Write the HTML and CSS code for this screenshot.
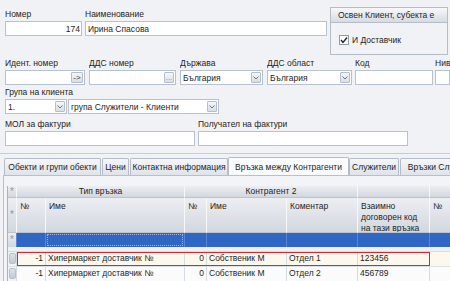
FILE: index.html
```html
<!DOCTYPE html>
<html lang="bg">
<head>
  <meta charset="UTF-8" />
  <title>Контрагент</title>
  <link rel="stylesheet" href="styles.css">
</head>
<body>

  <div class="form">
    <div class="top">
      <div class="field f-num">
        <div class="lbl">Номер</div>
        <div class="box right">174</div>
      </div>
      <div class="field f-name">
        <div class="lbl">Наименование</div>
        <div class="box">Ирина Спасова</div>
      </div>
      <div class="group">
        <div class="group-head">Освен Клиент, субекта е</div>
        <div class="group-body">
          <span class="check">
            <svg width="8" height="8" viewBox="0 0 8 8"><polyline points="1,4 3,6.5 7,1.5" fill="none" stroke="#222" stroke-width="1.4"/></svg>
          </span>
          И Доставчик
        </div>
      </div>
    </div>

    <div class="row">
      <div class="field f-ident">
        <div class="lbl">Идент. номер</div>
        <div class="box"><span class="val"></span><span class="btn wide">-&gt;</span></div>
      </div>
      <div class="field f-vat">
        <div class="lbl">ДДС номер</div>
        <div class="box"><span class="val"></span><span class="btn dots">...</span></div>
      </div>
      <div class="field f-country">
        <div class="lbl">Държава</div>
        <div class="box"><span class="val">България</span><span class="btn"><svg width="6" height="4" viewBox="0 0 6 4"><polyline points="0.5,0.5 3,3 5.5,0.5" fill="none" stroke="#6b7585" stroke-width="1"/></svg></span></div>
      </div>
      <div class="field f-area">
        <div class="lbl">ДДС област</div>
        <div class="box"><span class="val">България</span><span class="btn"><svg width="6" height="4" viewBox="0 0 6 4"><polyline points="0.5,0.5 3,3 5.5,0.5" fill="none" stroke="#6b7585" stroke-width="1"/></svg></span></div>
      </div>
      <div class="field f-code">
        <div class="lbl">Код</div>
        <div class="box"></div>
      </div>
      <div class="field f-more">
        <div class="lbl">Ниво</div>
        <div class="box"></div>
      </div>
    </div>

    <div class="row">
      <div class="field">
        <div class="lbl">Група на клиента</div>
        <div class="pair">
          <div class="box f-grp1"><span class="val">1.</span><span class="btn"><svg width="6" height="4" viewBox="0 0 6 4"><polyline points="0.5,0.5 3,3 5.5,0.5" fill="none" stroke="#6b7585" stroke-width="1"/></svg></span></div>
          <div class="box f-grp2"><span class="val">група Служители - Клиенти</span><span class="btn"><svg width="6" height="4" viewBox="0 0 6 4"><polyline points="0.5,0.5 3,3 5.5,0.5" fill="none" stroke="#6b7585" stroke-width="1"/></svg></span></div>
        </div>
      </div>
    </div>

    <div class="row row-last">
      <div class="field f-mol">
        <div class="lbl">МОЛ за фактури</div>
        <div class="box"></div>
      </div>
      <div class="field f-recv">
        <div class="lbl">Получател на фактури</div>
        <div class="box"></div>
      </div>
    </div>
  </div>

  <div class="tabs">
    <div class="tab t1">Обекти и групи обекти</div>
    <div class="tab t2">Цени</div>
    <div class="tab t3">Контактна информация</div>
    <div class="tab t4 active">Връзка между Контрагенти</div>
    <div class="tab t5">Служители</div>
    <div class="tab t6">Връзки Служители</div>
  </div>

  <div class="page">
    <div class="grid">
      <div class="gr band">
        <div class="c ind">*</div>
        <div class="c c-type">Тип връзка</div>
        <div class="c c-k2">Контрагент 2</div>
        <div class="c c-code"></div>
        <div class="c c-rest"></div>
      </div>
      <div class="gr head">
        <div class="c ind">*</div>
        <div class="c c-n1">№</div>
        <div class="c c-name1">Име</div>
        <div class="c c-n2">№</div>
        <div class="c c-name2">Име</div>
        <div class="c c-note">Коментар</div>
        <div class="c c-code">Взаимно договорен код на тази връзка</div>
        <div class="c c-rest">№</div>
      </div>
      <div class="gr newrow">
        <div class="c ind">*</div>
        <div class="c c-n1"></div>
        <div class="c c-name1"><span class="focus"></span></div>
        <div class="c c-n2"></div>
        <div class="c c-name2"></div>
        <div class="c c-note"></div>
        <div class="c c-code"></div>
        <div class="c c-rest"></div>
      </div>
      <div class="spacer"></div>
      <div class="gr data current">
        <div class="c ind"><span class="knob"></span></div>
        <div class="hl">
          <div class="c c-n1 right">-1</div>
          <div class="c c-name1">Хипермаркет доставчик №</div>
          <div class="c c-n2 right">0</div>
          <div class="c c-name2">Собственик М</div>
          <div class="c c-note">Отдел 1</div>
          <div class="c c-code">123456</div>
        </div>
        <div class="c c-rest"></div>
      </div>
      <div class="gr data">
        <div class="c ind"><span class="knob"></span></div>
        <div class="c c-n1 right">-1</div>
        <div class="c c-name1">Хипермаркет доставчик №</div>
        <div class="c c-n2 right">0</div>
        <div class="c c-name2">Собственик М</div>
        <div class="c c-note">Отдел 2</div>
        <div class="c c-code">456789</div>
        <div class="c c-rest"></div>
      </div>
    </div>
  </div>

</body>
</html>
```

FILE: styles.css
```css
body {
  margin: 0;
  padding: 0;
  font-family: "Liberation Sans", Arial, sans-serif;
  font-size: 8.5px;
  color: #1e1e1e;
  background-color: #f0f2f5;
  width: 450px;
  height: 281px;
  overflow: hidden;
}

/* ---------- form ---------- */

.form {
  padding: 7px 0 7px 5px;
  border-bottom: 1px solid #c4cbd5;
  overflow: hidden;
}

.top {
  display: flex;
  height: 49px;
}

.row {
  display: flex;
}

.row-last {
  margin-top: 3px;
}

.field {
  display: flex;
  flex-direction: column;
  flex-shrink: 0;
}

.lbl {
  height: 14px;
  line-height: 14px;
  white-space: nowrap;
  overflow: hidden;
}

.box {
  display: flex;
  align-items: center;
  box-sizing: border-box;
  height: 15px;
  padding: 0 1px 0 2px;
  background-color: white;
  border: 1px solid #b7c2d0;
  white-space: nowrap;
  overflow: hidden;
}

.box.right {
  justify-content: flex-end;
}

.val {
  flex: 1;
  overflow: hidden;
}

.btn {
  display: flex;
  align-items: center;
  justify-content: center;
  box-sizing: border-box;
  width: 10px;
  height: 11px;
  font-size: 8px;
  color: #333;
  background: linear-gradient(#f4f6f8, #d9dee5);
  border: 1px solid #b5becb;
  border-radius: 1px;
}

.btn.wide {
  width: 12px;
}

.btn.dots {
  font-size: 7px;
  color: #777;
  line-height: 6px;
}

.f-num { width: 77px; margin-right: 3px; }
.f-name { width: 242px; margin-right: 3px; }

.f-ident { width: 80px; margin-right: 4px; }
.f-vat { width: 87px; margin-right: 4px; }
.f-country { width: 83px; margin-right: 4px; }
.f-area { width: 85px; margin-right: 3px; }
.f-code { width: 78px; margin-right: 2px; }
.f-more { width: 15px; }

.pair {
  display: flex;
  gap: 1px;
}

.f-grp1 { width: 62px; }
.f-grp2 { width: 151px; }

.f-mol { width: 190px; margin-right: 3px; }
.f-recv { width: 210px; }

/* group box */

.group {
  box-sizing: border-box;
  width: 118px;
  height: 48px;
  border: 1px solid #b5bdc8;
  flex-shrink: 0;
}

.group-head {
  height: 14px;
  line-height: 14px;
  padding-left: 7px;
  background: linear-gradient(#f7f8fa, #d6dbe3);
  border-bottom: 1px solid #b5bdc8;
  white-space: nowrap;
}

.group-body {
  display: flex;
  align-items: center;
  gap: 3px;
  padding: 12px 0 0 8px;
}

.check {
  display: flex;
  align-items: center;
  justify-content: center;
  box-sizing: border-box;
  width: 10px;
  height: 10px;
  background: white;
  border: 1px solid #8d9aab;
}

/* ---------- tabs ---------- */

.tabs {
  display: flex;
  align-items: flex-end;
  height: 20px;
  padding-left: 4px;
  margin-top: 1px;
  overflow: hidden;
}

.tab {
  box-sizing: border-box;
  height: 17px;
  line-height: 16px;
  text-align: center;
  white-space: nowrap;
  overflow: hidden;
  margin-right: 1px;
  background: linear-gradient(#f5f6f8, #dfe3ea);
  border: 1px solid #b3bcc8;
  border-bottom: none;
  border-radius: 2px 2px 0 0;
  flex-shrink: 0;
}

.tab.active {
  height: 19px;
  line-height: 18px;
  background: #fafbfc;
  margin-right: 0;
  position: relative;
  top: 1px;
}

.t1 { width: 97px; }
.t2 { width: 27px; }
.t3 { width: 98px; margin-right: 0; }
.t4 { width: 121px; }
.t5 { width: 50px; }
.t6 { width: 90px; }

/* ---------- grid page ---------- */

.page {
  margin-left: 3px;
  height: 95px;
  padding: 10px 0 0 3px;
  border: 1px solid #b7bfca;
  border-right: none;
  border-bottom: none;
  background-color: #f3f4f7;
  overflow: hidden;
}

.grid {
  width: 470px;
  border-left: 1px solid #a9b2bf;
}

.gr {
  display: flex;
}

.c {
  box-sizing: border-box;
  flex-shrink: 0;
  padding: 0 2px;
  white-space: nowrap;
  overflow: hidden;
  border-right: 1px solid #d6dbe2;
}

.c.right {
  text-align: right;
}

.ind { width: 9px; padding: 0; text-align: center; color: #8e97a4; font-size: 10px; }
.c-type { width: 168px; }
.c-k2 { width: 173px; }
.c-n1 { width: 29px; }
.c-name1 { width: 139px; }
.c-n2 { width: 22px; }
.c-name2 { width: 80px; }
.c-note { width: 71px; }
.c-code { width: 72px; }
.c-rest { width: 60px; }

.band .c,
.head .c {
  background: linear-gradient(#eceef2, #d2d7df);
  border-right: 1px solid #f7f8fa;
  border-bottom: 1px solid #bcc3cd;
}

.band {
  height: 12px;
}

.band .c {
  line-height: 11px;
  text-align: center;
}

.band .ind {
  line-height: 12px;
}

.head {
  height: 35px;
}

.head .c {
  padding: 3px 3px 0;
  line-height: 11px;
  white-space: normal;
}

.head .ind {
  padding: 0;
  line-height: 34px;
}

.newrow {
  height: 14px;
}

.newrow .c {
  background-color: #3066c4;
  border-right: 1px solid #5a86d3;
  padding: 1px;
}

.newrow .ind {
  background: linear-gradient(#eceef2, #d2d7df);
  line-height: 14px;
  padding: 0;
}

.focus {
  display: block;
  height: 10px;
  border: 1px dotted #9db4e0;
}

.spacer {
  height: 4px;
  background-color: #eef0f4;
  border-bottom: 1px solid #d6dbe2;
}

.data {
  height: 14px;
  line-height: 13px;
  background-color: #fbfbfc;
  border-bottom: 1px solid #dde1e6;
}

.data.current {
  background-color: #fdf8ed;
}

.data .ind {
  display: flex;
  justify-content: center;
  padding-top: 1px;
  background-color: #f0f2f5;
}

.knob {
  display: block;
  width: 7px;
  height: 11px;
  border-radius: 2px;
  background: linear-gradient(#dde1e7, #c3c9d2);
  border: 1px solid #b9c0ca;
  box-sizing: border-box;
}

.hl {
  display: flex;
  outline: 1px solid #e0232d;
  outline-offset: -1px;
}
```
